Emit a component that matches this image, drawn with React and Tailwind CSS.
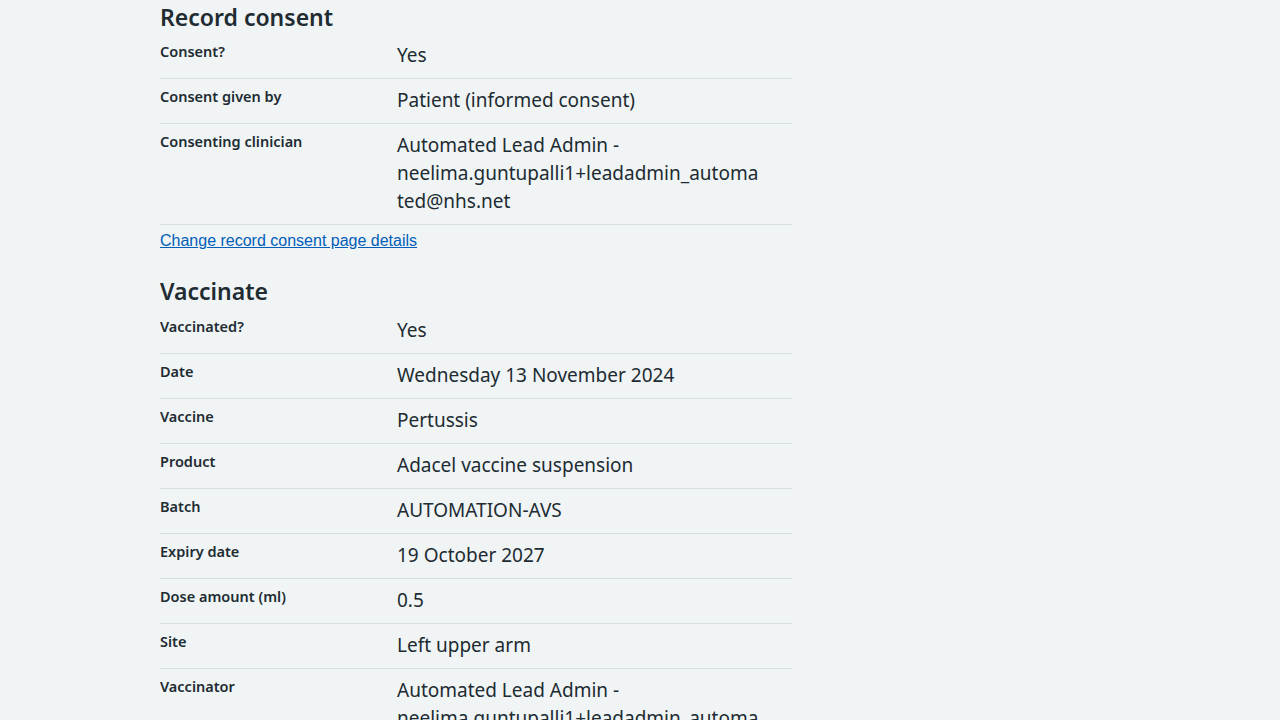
import React from 'react'

const consentRows = [
  { key: 'Consent?', value: ['Yes'] },
  { key: 'Consent given by', value: ['Patient (informed consent)'] },
  {
    key: 'Consenting clinician',
    value: ['Automated Lead Admin -', 'neelima.guntupalli1+leadadmin_automa', 'ted@nhs.net'],
  },
]

const vaccinateRows = [
  { key: 'Vaccinated?', value: ['Yes'] },
  { key: 'Date', value: ['Wednesday 13 November 2024'] },
  { key: 'Vaccine', value: ['Pertussis'] },
  { key: 'Product', value: ['Adacel vaccine suspension'] },
  { key: 'Batch', value: ['AUTOMATION-AVS'] },
  { key: 'Expiry date', value: ['19 October 2027'] },
  { key: 'Dose amount (ml)', value: ['0.5'] },
  { key: 'Site', value: ['Left upper arm'] },
  {
    key: 'Vaccinator',
    value: ['Automated Lead Admin -', 'neelima.guntupalli1+leadadmin_automa', 'ted@nhs.net'],
  },
]

function SummaryList({ rows }) {
  return (
    <dl>
      {rows.map((row) => (
        <div key={row.key} className="flex border-b border-[#d8dde0] pt-[7px] pb-[9px]">
          <dt className="w-[237px] shrink-0 text-[14.5px] leading-[20px] font-semibold">
            {row.key}
          </dt>
          <dd className="flex-1 text-[19px] leading-[28px]">
            {row.value.map((line) => (
              <span key={line} className="block">{line}</span>
            ))}
          </dd>
        </div>
      ))}
    </dl>
  )
}

export default function App() {
  return (
    <div
      className="min-h-screen bg-[#f0f4f5] text-[#212b32]"
      style={{ fontFamily: '"Noto Sans", "Open Sans", sans-serif' }}
    >
      <div className="ml-[160px] w-[632px]">
        <h2 className="text-[23px] leading-[34px] font-semibold">Record consent</h2>
        <SummaryList rows={consentRows} />
        <a
          href="#"
          className="mt-1 block w-fit text-[16px] leading-[24px] text-[#005eb8] underline"
          style={{ fontFamily: '"Liberation Sans", Arial, sans-serif' }}
        >
          Change record consent page details
        </a>
        <h2 className="mt-[21px] mb-px text-[23px] leading-[34px] font-semibold">Vaccinate</h2>
        <SummaryList rows={vaccinateRows} />
      </div>
    </div>
  )
}
